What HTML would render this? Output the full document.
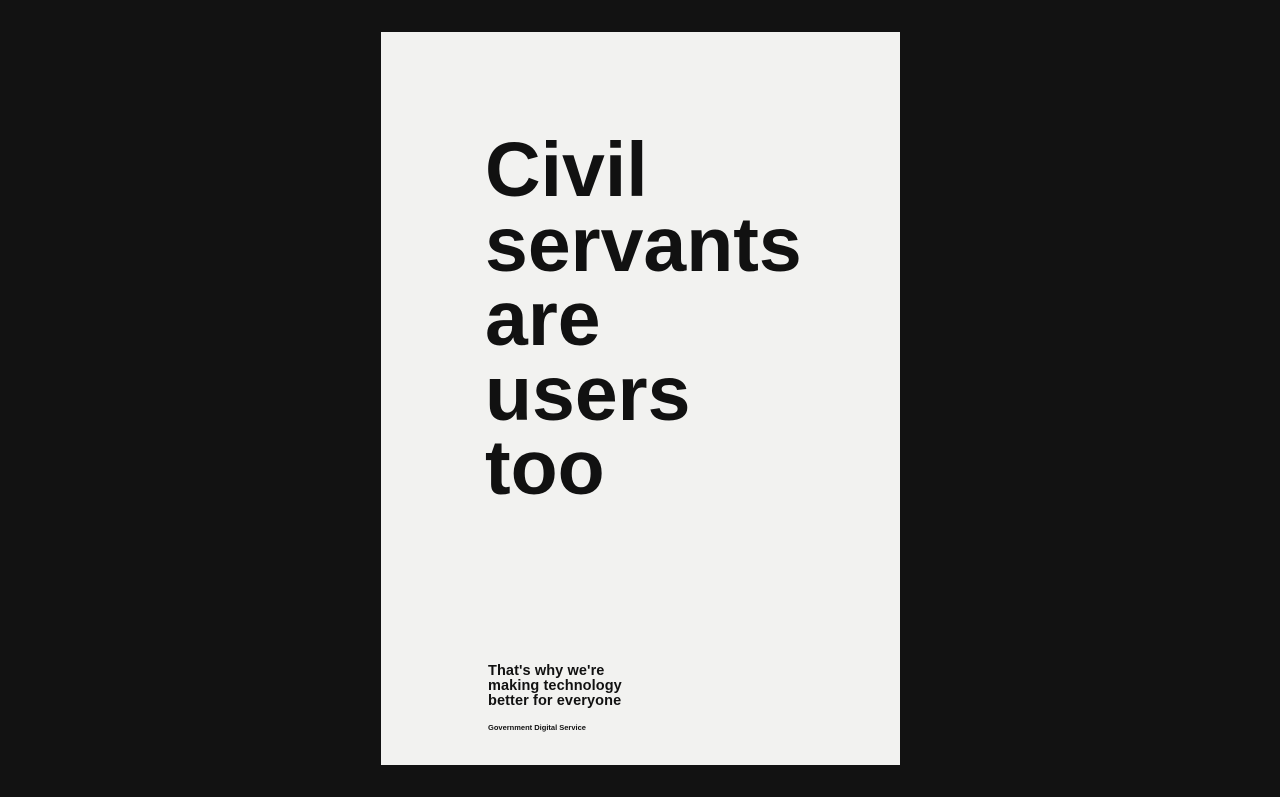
<!DOCTYPE html>
<html><head><meta charset="utf-8"><style>
html,body{margin:0;padding:0;background:#121212;width:1280px;height:797px;overflow:hidden}
.p{position:absolute;left:381px;top:32px;width:519px;height:733px;background:#f2f2f0}
.h{position:absolute;left:485px;top:133px;font:bold 77px/74.5px "Liberation Sans",sans-serif;color:#111;letter-spacing:0px;margin:0}
.s{position:absolute;left:488px;top:664px;font:bold 14.5px/15px "Liberation Sans",sans-serif;color:#111;letter-spacing:0.1px}
.g{position:absolute;left:488px;top:723px;font:bold 7.5px/9px "Liberation Sans",sans-serif;color:#111}
</style></head><body>
<div class="p"></div>
<div class="h">Civil<br>servants<br>are<br>users<br>too</div>
<div class="s">That's why we're<br>making technology<br>better for everyone</div>
<div class="g">Government Digital Service</div>
</body></html>
